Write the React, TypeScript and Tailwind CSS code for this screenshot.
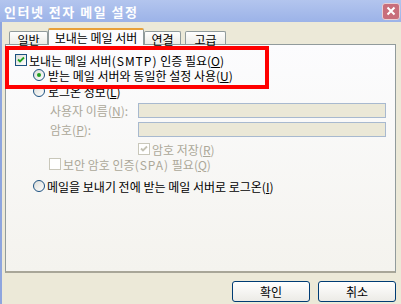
import React from "react";

const Check = ({ disabled }: { disabled?: boolean }) => (
  <svg width="8" height="8" viewBox="0 0 8 8">
    <path
      d="M1 3.5 L3 5.5 L7 1.5"
      fill="none"
      stroke={disabled ? "#c4c2b4" : "#21a121"}
      strokeWidth="1.8"
    />
  </svg>
);

const CheckBox = ({ checked, disabled }: { checked?: boolean; disabled?: boolean }) => (
  <span
    className={
      "w-[12px] h-[12px] shrink-0 flex items-center justify-center border " +
      (disabled
        ? "border-[#c9c7ba] bg-white"
        : "border-[#1c5180] bg-[linear-gradient(135deg,#dcdcd7,#ffffff)]")
    }
  >
    {checked && <Check disabled={disabled} />}
  </span>
);

const Radio = ({ checked }: { checked?: boolean }) => (
  <span className="w-[12px] h-[12px] shrink-0 rounded-full border border-[#1c5180] bg-[linear-gradient(135deg,#dcdcd7,#ffffff)] flex items-center justify-center">
    {checked && <span className="w-[4px] h-[4px] rounded-full bg-[#21a121]" />}
  </span>
);

const tabIdle =
  "h-[13px] mb-px border border-b-0 border-[#919b9c] rounded-t-[2px] bg-[linear-gradient(180deg,#ffffff,#ecebe6)] flex items-start justify-center pt-[2px]";

const btn =
  "w-[78px] h-[21px] rounded-[3px] border border-[#003c74] bg-[linear-gradient(180deg,#ffffff,#ecebe6)] text-[12px]";

const App: React.FC = () => {
  return (
    <div className="w-[401px] h-[304px] relative overflow-hidden bg-[#ece9d8] flex flex-col font-['Noto_Sans_CJK_KR',sans-serif] text-[12px] leading-none text-black">
      {/* Title bar */}
      <div className="h-[22px] shrink-0 flex items-center justify-between pl-[4px] pr-[1px] bg-[linear-gradient(180deg,#b3c5ee,#9cb3e8)]">
        <span className="text-white text-[13px] font-bold tracking-[1.5px]">
          인터넷 전자 메일 설정
        </span>
        <span className="w-[18px] h-[17px] rounded-[3px] border border-[#e9d0d4] bg-[#c86e7b] flex items-center justify-center">
          <svg width="10" height="10" viewBox="0 0 10 10">
            <path d="M1.5 1.5 L8.5 8.5 M8.5 1.5 L1.5 8.5" stroke="#fff" strokeWidth="2" />
          </svg>
        </span>
      </div>

      <div className="flex-1 flex flex-col border-l-[2px] border-[#8ea5de]">
        {/* Tabs */}
        <div className="h-[23px] pl-[7px] flex items-end relative z-10 -mb-px">
          <div className={tabIdle + " w-[39px]"}>일반</div>
          <div className="w-[96px] h-[17px] border border-b-0 border-[#919b9c] border-t-[2px] border-t-[#e8a13a] rounded-t-[2px] bg-[#fcfcfe] flex items-start justify-center pt-[2px]">
            보내는 메일 서버
          </div>
          <div className={tabIdle + " w-[37px]"}>연결</div>
          <div className={tabIdle + " w-[41px] ml-[4px]"}>고급</div>
        </div>

        {/* Panel */}
        <div className="ml-[3px] w-[391px] h-[229px] shrink-0 border border-[#919b9c] border-b-2 border-b-[#a8a698] bg-[linear-gradient(180deg,#fcfcfe,#f4f3ee)] flex flex-col">
          <label className="h-[14px] mt-[8px] pl-[9px] flex items-center gap-[2px]">
            <CheckBox checked />
            <span className="block leading-[13px]">
              보내는 메일 서버<span className="tracking-[1px]">(SMTP)</span> 인증 필요(<u>O</u>)
            </span>
          </label>
          <label className="h-[14px] mt-px pl-[27px] flex items-center gap-[3px]">
            <Radio checked />
            <span className="block leading-[13px]">
              받는 메일 서버와 동일한 설정 사용(<u>U</u>)
            </span>
          </label>
          <label className="h-[14px] mt-[2px] pl-[27px] flex items-center gap-[3px]">
            <Radio />
            <span className="block leading-[13px]">
              로그온 정보(<u>L</u>)
            </span>
          </label>
          <div className="h-[15px] mt-[5px] pl-[44px] flex items-center text-[#aca899]">
            <span className="block w-[88px] leading-[13px]">
              사용자 이름(<u>N</u>):
            </span>
            <span className="w-[248px] h-[15px] border border-[#a8b9cf] bg-[#ebe8d7]" />
          </div>
          <div className="h-[15px] mt-[4px] pl-[44px] flex items-center text-[#aca899]">
            <span className="block w-[88px] leading-[13px]">
              암호(<u>P</u>):
            </span>
            <span className="w-[248px] h-[15px] border border-[#a8b9cf] bg-[#ebe8d7]" />
          </div>
          <label className="h-[14px] mt-[5px] pl-[132px] flex items-center gap-[2px] text-[#aca899]">
            <CheckBox checked disabled />
            <span className="block leading-[13px]">
              암호 저장(<u>R</u>)
            </span>
          </label>
          <label className="h-[14px] mt-[1px] pl-[43px] flex items-center gap-[2px] text-[#aca899]">
            <CheckBox disabled />
            <span className="block leading-[13px]">
              보안 암호 인증<span className="tracking-[1px]">(SPA)</span> 필요(<u>Q</u>)
            </span>
          </label>
          <label className="h-[14px] mt-[8px] pl-[27px] flex items-center gap-[2px]">
            <Radio />
            <span className="block leading-[13px]">
              메일을 보내기 전에 받는 메일 서버로 로그온(<u>I</u>)
            </span>
          </label>
        </div>

        {/* Buttons */}
        <div className="mt-[8px] pr-[5px] flex justify-end gap-[8px]">
          <button className={btn}>확인</button>
          <button className={btn}>취소</button>
        </div>
      </div>

      {/* Red annotation box */}
      <div className="absolute left-[5px] top-[46px] w-[264px] h-[43px] border-[4px] border-[#ff0000] pointer-events-none" />
    </div>
  );
};

export default App;
